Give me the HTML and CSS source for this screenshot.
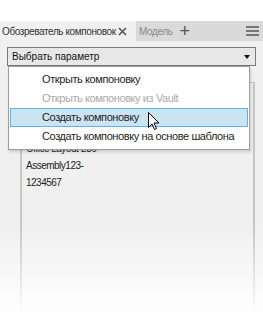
FILE: index.html
```html
<!DOCTYPE html>
<html lang="ru">
<head>
    <meta charset="UTF-8">
    <title>Обозреватель компоновок</title>
    <link rel="stylesheet" href="styles.css">
</head>
<body>
    <div class="window">
        <!-- Tabs -->
        <div class="tabbar">
            <div class="tab active">Обозреватель компоновок
                <svg class="close" width="9" height="9" viewBox="0 0 9 9">
                    <path d="M1 1 L8 8 M8 1 L1 8" stroke="#555" stroke-width="1.6"/>
                </svg>
            </div>
            <div class="tab">Модель <span class="plus">+</span></div>
            <div class="menu-btn">
                <span></span><span></span><span></span>
            </div>
        </div>

        <div class="content">
            <div class="select">
                <span>Выбрать параметр</span>
                <span class="arrow"></span>
            </div>

            <div class="browser">
                <div class="browser-head"></div>
                <div class="node">Office Layout-236</div>
                <div class="node">Assembly123-</div>
                <div class="node">1234567</div>
            </div>

            <!-- Dropdown menu over the browser -->
            <ul class="dropdown">
                <li>Открыть компоновку</li>
                <li class="disabled">Открыть компоновку из Vault</li>
                <li class="hover">Создать компоновку</li>
                <li>Создать компоновку на основе шаблона</li>
            </ul>

            <svg class="cursor" width="12" height="19" viewBox="0 0 12 19">
                <path d="M0.5 0.5 L0.5 15.5 L4 12 L6.5 17.5 L8.5 16.5 L6 11 L11 11 Z" fill="#fff" stroke="#000" stroke-width="1"/>
            </svg>
        </div>

        <div class="fade"></div>
    </div>
</body>
</html>
```

FILE: styles.css
```css
body {
    margin: 0;
    background-color: #fff;
    font-family: "Liberation Sans", Arial, sans-serif;
    color: #222;
}
.window {
    position: relative;
    width: 263px;
    height: 296px;
    margin-top: 21px;
    background-color: #f0f0f0;
    overflow: hidden;
}
.tabbar {
    display: flex;
    align-items: center;
    height: 20px;
    background-color: #dadada;
    font-size: 10px;
    letter-spacing: -0.4px;
}
.tab {
    display: flex;
    align-items: center;
    height: 20px;
    padding: 0 3px;
    color: #8a8a8a;
    white-space: nowrap;
}
.tab.active {
    box-sizing: border-box;
    width: 136px;
    padding-left: 2px;
    background-color: #f0f0f0;
    color: #333;
}
.close {
    margin-left: auto;
    margin-right: 6px;
}
.plus {
    margin-left: 7px;
    font-size: 18px;
    color: #555;
}
.menu-btn {
    margin-left: auto;
    margin-right: 4px;
    display: flex;
    flex-direction: column;
    gap: 2px;
}
.menu-btn span {
    display: block;
    width: 13px;
    height: 2px;
    background-color: #777;
}
.content {
    position: relative;
    padding: 6px 7px 0 7px;
}
.select {
    display: flex;
    align-items: center;
    justify-content: space-between;
    height: 17px;
    padding: 0 5px 0 4px;
    border: 1px solid #7a7a7a;
    background-color: #e8e8e8;
    font-size: 10px;
    color: #111;
}
.arrow {
    width: 0;
    height: 0;
    border-left: 3px solid transparent;
    border-right: 3px solid transparent;
    border-top: 4px solid #111;
}
.browser {
    margin: 16px 1px 0 13px;
    height: 240px;
    border-left: 2px solid #c6c6c6;
    border-right: 2px solid #c6c6c6;
    border-top: 1px solid #c6c6c6;
    padding: 57px 0 0 4px;
    position: relative;
}
.browser-head {
    position: absolute;
    top: 0;
    right: 0;
    width: 3px;
    height: 12px;
    border-left: 1px solid #c6c6c6;
}
.node {
    font-size: 10px;
    line-height: 17px;
    letter-spacing: -0.5px;
    color: #222;
}
.dropdown {
    position: absolute;
    top: 25px;
    left: 8px;
    width: 238px;
    margin: 0;
    padding: 3px 1px 3px;
    list-style: none;
    background-color: #fff;
    border: 1px solid #9c9c9c;
    box-shadow: 1px 2px 3px rgba(0, 0, 0, 0.15);
    font-size: 11px;
    letter-spacing: -0.4px;
    color: #1e1e1e;
}
.dropdown li {
    height: 17px;
    line-height: 17px;
    padding-left: 31px;
    border: 1px solid transparent;
    white-space: nowrap;
}
.dropdown li.disabled {
    color: #a8a8a8;
}
.dropdown li.hover {
    background-color: #cbe4f2;
    border-color: #5fb3e4;
}
.cursor {
    position: absolute;
    top: 71px;
    left: 148px;
}
.fade {
    position: absolute;
    left: 0;
    right: 0;
    bottom: 0;
    height: 90px;
    background: linear-gradient(to bottom, rgba(255, 255, 255, 0), #fff);
}
```
